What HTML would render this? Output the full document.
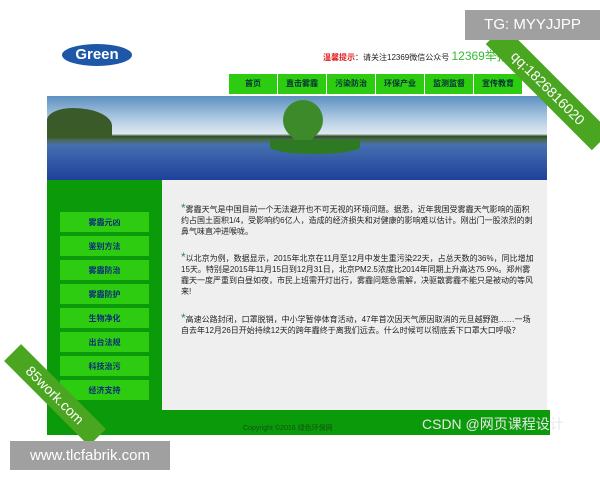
<!DOCTYPE html>
<html><head><meta charset="utf-8"><style>
*{margin:0;padding:0;box-sizing:border-box}
body{width:600px;height:480px;background:#fff;position:relative;overflow:hidden;font-family:"Liberation Sans","Noto Sans CJK SC",sans-serif}
.abs{position:absolute}
.nav{left:229px;top:74px;height:20px;display:flex}
.nav div{width:49px;height:20px;background:#2ecc10;border-right:1px solid #fff;font-size:8px;color:#033;text-align:center;line-height:20px;font-weight:bold}
.banner{left:47px;top:96px;width:500px;height:84px;background:linear-gradient(#5d90c0 0%,#a9c6e0 25%,#dfe9f1 45%,#2e4e22 48%,#4a6a50 52%,#4570b0 58%,#20409a 100%)}
.side{left:47px;top:180px;width:115px;height:230px;background:#0a9a0a}
.menu{left:60px;width:89px;height:20px;background:#2ecc10;font-size:8px;color:#0a2c7a;text-align:center;line-height:22px;font-weight:bold}
.content{left:162px;top:180px;width:385px;height:230px;background:#efefef}
.p{left:181px;width:355px;font-size:8px;line-height:11px;color:#222}
.p b{color:#2a8a5a;font-size:12px;font-weight:normal}
.foot{left:47px;top:410px;width:503px;height:25px;background:#0a9a0a}
</style></head><body>
<div class="abs" style="left:62px;top:44px;width:70px;height:22px;border-radius:50%;background:#1f57a8;color:#fff;font-weight:bold;font-size:15px;line-height:22px;text-align:center">Green</div>
<div class="abs" style="left:323px;top:47px;font-size:8px;color:#222"><span style="color:#e02020;font-weight:bold">温馨提示</span>：请关注12369微信公众号 <span style="color:#33bb33;font-size:12px">12369举报</span></div>
<div class="abs nav"><div>首页</div><div>直击雾霾</div><div>污染防治</div><div>环保产业</div><div>监测监督</div><div>宣传教育</div></div>
<div class="abs banner"></div>
<div class="abs" style="left:283px;top:100px;width:40px;height:40px;background:#3d8a2a;border-radius:50% 50% 50% 0;transform:rotate(-45deg)"></div>
<div class="abs" style="left:270px;top:140px;width:90px;height:14px;background:#2e7a22;border-radius:0 0 50% 50%"></div>
<div class="abs" style="left:47px;top:108px;width:65px;height:30px;background:#3a5a2a;border-radius:40% 60% 0 0"></div>
<div class="abs side"></div>
<div class="abs content"></div>
<div class="abs menu" style="top:212px">雾霾元凶</div>
<div class="abs menu" style="top:236px">鉴别方法</div>
<div class="abs menu" style="top:260px">雾霾防治</div>
<div class="abs menu" style="top:284px">雾霾防护</div>
<div class="abs menu" style="top:308px">生物净化</div>
<div class="abs menu" style="top:332px">出台法规</div>
<div class="abs menu" style="top:356px">科技治污</div>
<div class="abs menu" style="top:380px">经济支持</div>
<div class="abs p" style="top:203px"><b>*</b>雾霾天气是中国目前一个无法避开也不可无视的环境问题。据悉，近年我国受雾霾天气影响的面积约占国土面积1/4，受影响约6亿人，造成的经济损失和对健康的影响难以估计。刚出门一股浓烈的刺鼻气味直冲进喉咙。</div>
<div class="abs p" style="top:252px"><b>*</b>以北京为例，数据显示，2015年北京在11月至12月中发生重污染22天，占总天数的36%，同比增加15天。特别是2015年11月15日到12月31日，北京PM2.5浓度比2014年同期上升高达75.9%。郑州雾霾天一度严重到白昼如夜，市民上班需开灯出行，雾霾问题急需解，决驱散雾霾不能只是被动的等风来!</div>
<div class="abs p" style="top:313px"><b>*</b>高速公路封闭，口罩脱销，中小学暂停体育活动，47年首次因天气原因取消的元旦越野跑……一场自去年12月26日开始持续12天的跨年霾终于离我们远去。什么时候可以彻底丢下口罩大口呼吸？</div>
<div class="abs foot"></div>
<div class="abs" style="left:243px;top:423px;font-size:7px;color:#115511">Copyright ©2016 绿色环保网</div>
<div class="abs" style="left:422px;top:414px;font-size:14px;color:#e8e8e8">CSDN @网页课程设计</div>
<div class="abs" style="left:473px;top:75px;width:150px;height:26px;background:#4aa520;color:#fff;font-size:14px;line-height:26px;text-align:center;transform:rotate(45deg)">qq:1826816020</div>
<div class="abs" style="left:465px;top:10px;width:135px;height:30px;background:#a0a0a0;color:#fff;font-size:15px;line-height:30px;text-align:center">TG: MYYJJPP</div>
<div class="abs" style="left:-5px;top:383px;width:120px;height:24px;background:#4aa520;color:#fff;font-size:14px;line-height:24px;text-align:center;transform:rotate(45deg)">85work.com</div>
<div class="abs" style="left:10px;top:441px;width:160px;height:29px;background:#a0a0a0;color:#fff;font-size:15px;line-height:29px;text-align:center">www.tlcfabrik.com</div>
</body></html>
